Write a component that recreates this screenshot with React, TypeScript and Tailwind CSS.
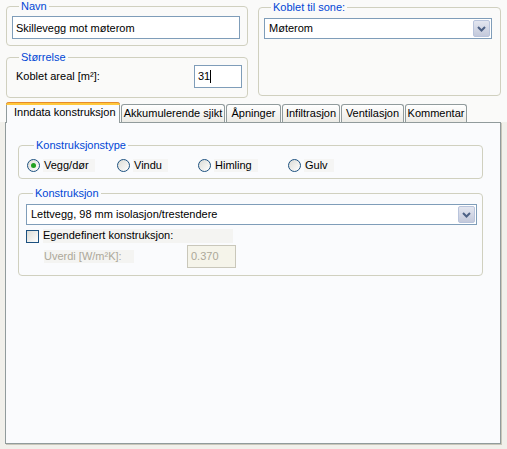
import React from 'react'

const font = "font-['Liberation_Sans',Arial,sans-serif] text-[11px] leading-[13px] text-black"

function Group({ label, className, children }: { label: string; className?: string; children?: React.ReactNode }) {
  return (
    <fieldset className={`border border-[#D0D0BF] rounded-[4px] ${className ?? ''}`}>
      <legend className="ml-[7px] px-[2px] text-[#0046D5] leading-[13px]">{label}</legend>
      {children}
    </fieldset>
  )
}

function Chevron() {
  return (
    <svg width="9" height="6" viewBox="0 0 9 6">
      <path d="M1 1 L4.5 4.5 L8 1" fill="none" stroke="#4D6185" strokeWidth="2" />
    </svg>
  )
}

function Select({ value, className }: { value: string; className?: string }) {
  return (
    <div className={`flex items-center border border-[#7F9DB9] bg-white ${className ?? ''}`}>
      <span className="flex-1 pl-[4px]">{value}</span>
      <div className="w-[17px] h-[calc(100%-2px)] mr-[1px] flex items-center justify-center rounded-[2px] border border-[#B9C4DC] bg-gradient-to-b from-[#E3E6F0] to-[#C3C9DB]">
        <Chevron />
      </div>
    </div>
  )
}

function Radio({ label, checked, width }: { label: string; checked?: boolean; width: string }) {
  return (
    <div className={`flex items-center ${width}`}>
      <div className="w-[13px] h-[13px] rounded-full border border-[#1C5180] bg-gradient-to-br from-[#DCDCD6] to-white flex items-center justify-center shrink-0">
        {checked && <div className="w-[5px] h-[5px] rounded-full bg-[#21A121]" />}
      </div>
      <span className="ml-[3px] pl-[1px] pr-[6px] bg-[#F5F5F4]">{label}</span>
    </div>
  )
}

const tabs = [
  { label: 'Akkumulerende sjikt', w: 'w-[104px]' },
  { label: 'Åpninger', w: 'w-[55px]' },
  { label: 'Infiltrasjon', w: 'w-[58px]' },
  { label: 'Ventilasjon', w: 'w-[63px]' },
  { label: 'Kommentar', w: 'w-[62px]' },
]

export default function App() {
  return (
    <div className={`w-[507px] h-[449px] bg-[#FAFAF9] flex flex-col ${font}`}>
      {/* top fields */}
      <div className="flex pl-[6px] h-[102px]">
        <div className="w-[242px] flex flex-col">
          <Group label="Navn" className="h-[46px] px-[5px]">
            <input
              readOnly
              value="Skillevegg mot møterom"
              className="mt-[3px] w-[228px] h-[23px] border border-[#7F9DB9] bg-white px-[3px] outline-none"
            />
          </Group>
          <Group label="Størrelse" className="mt-[5px] h-[47px] px-[5px]">
            <div className="flex items-center justify-between mt-[1px]">
              <span className="pl-[4px]">Koblet areal [m²]:</span>
              <div className="w-[48px] h-[23px] border border-[#7F9DB9] bg-white flex items-center px-[3px]">
                31<span className="inline-block w-px h-[13px] bg-black" />
              </div>
            </div>
          </Group>
        </div>
        <Group label="Koblet til sone:" className="ml-[10px] mt-px w-[243px] h-[95px] px-[5px]">
          <Select value="Møterom" className="mt-[4px] w-[228px] h-[21px]" />
        </Group>
      </div>

      {/* tab control */}
      <div className="flex-1 flex flex-col">
        <div className="flex items-end h-[20px] pl-[6px]">
          <div className="w-[114px] h-[21px] -mb-px z-10 relative rounded-t-[3px] border-x border-[#919B9C] bg-[#FAFBFD] flex flex-col">
            <div className="h-[3px] rounded-t-[3px] bg-[#FFC83C] border-t border-[#E68B2C] -mx-px" />
            <span className="pl-[7px] pt-[1px]">Inndata konstruksjon</span>
          </div>
          {tabs.map(t => (
            <div
              key={t.label}
              className={`${t.w} ml-px h-[18px] rounded-t-[3px] border border-b-0 border-[#919B9C] bg-gradient-to-b from-white to-[#ECEBE6] flex items-center justify-center`}
            >
              {t.label}
            </div>
          ))}
        </div>
        <div className="flex-1 bg-[#F1F0EB] px-[5px] pb-[5px] flex">
          <div className="w-[496px] border border-[#919B9C] bg-[#FAFBFD] shadow-[1px_1px_0_#C9C7BA] px-[12px] pt-[16px]">
            <Group label="Konstruksjonstype" className="w-[465px] h-[40px] pl-[8px]">
              <div className="flex items-center mt-[7px]">
                <Radio label="Vegg/dør" checked width="w-[90px]" />
                <Radio label="Vindu" width="w-[81px]" />
                <Radio label="Himling" width="w-[90px]" />
                <Radio label="Gulv" width="w-[90px]" />
              </div>
            </Group>
            <Group label="Konstruksjon" className="mt-[8px] w-[465px] h-[89px] pl-[7px]">
              <Select value="Lettvegg, 98 mm isolasjon/trestendere" className="mt-[4px] w-[451px] h-[21px]" />
              <div className="flex items-center mt-[4px] h-[14px]">
                <div className="w-[13px] h-[13px] border border-[#1C5180] bg-gradient-to-br from-[#DCDCD6] to-white shrink-0" />
                <span className="ml-[4px] w-[190px] h-[14px] bg-[#F4F4F2]">Egendefinert konstruksjon:</span>
              </div>
              <div className="flex items-center mt-[2px]">
                <span className="ml-[18px] w-[90px] text-[#ACA899] bg-[#F4F4F2]">Uverdi [W/m²K]:</span>
                <div className="ml-[53px] w-[49px] h-[23px] border border-[#C9C7BA] bg-[#F5F4EA] flex items-center px-[3px] text-[#ACA899]">
                  0.370
                </div>
              </div>
            </Group>
          </div>
        </div>
      </div>
    </div>
  )
}
